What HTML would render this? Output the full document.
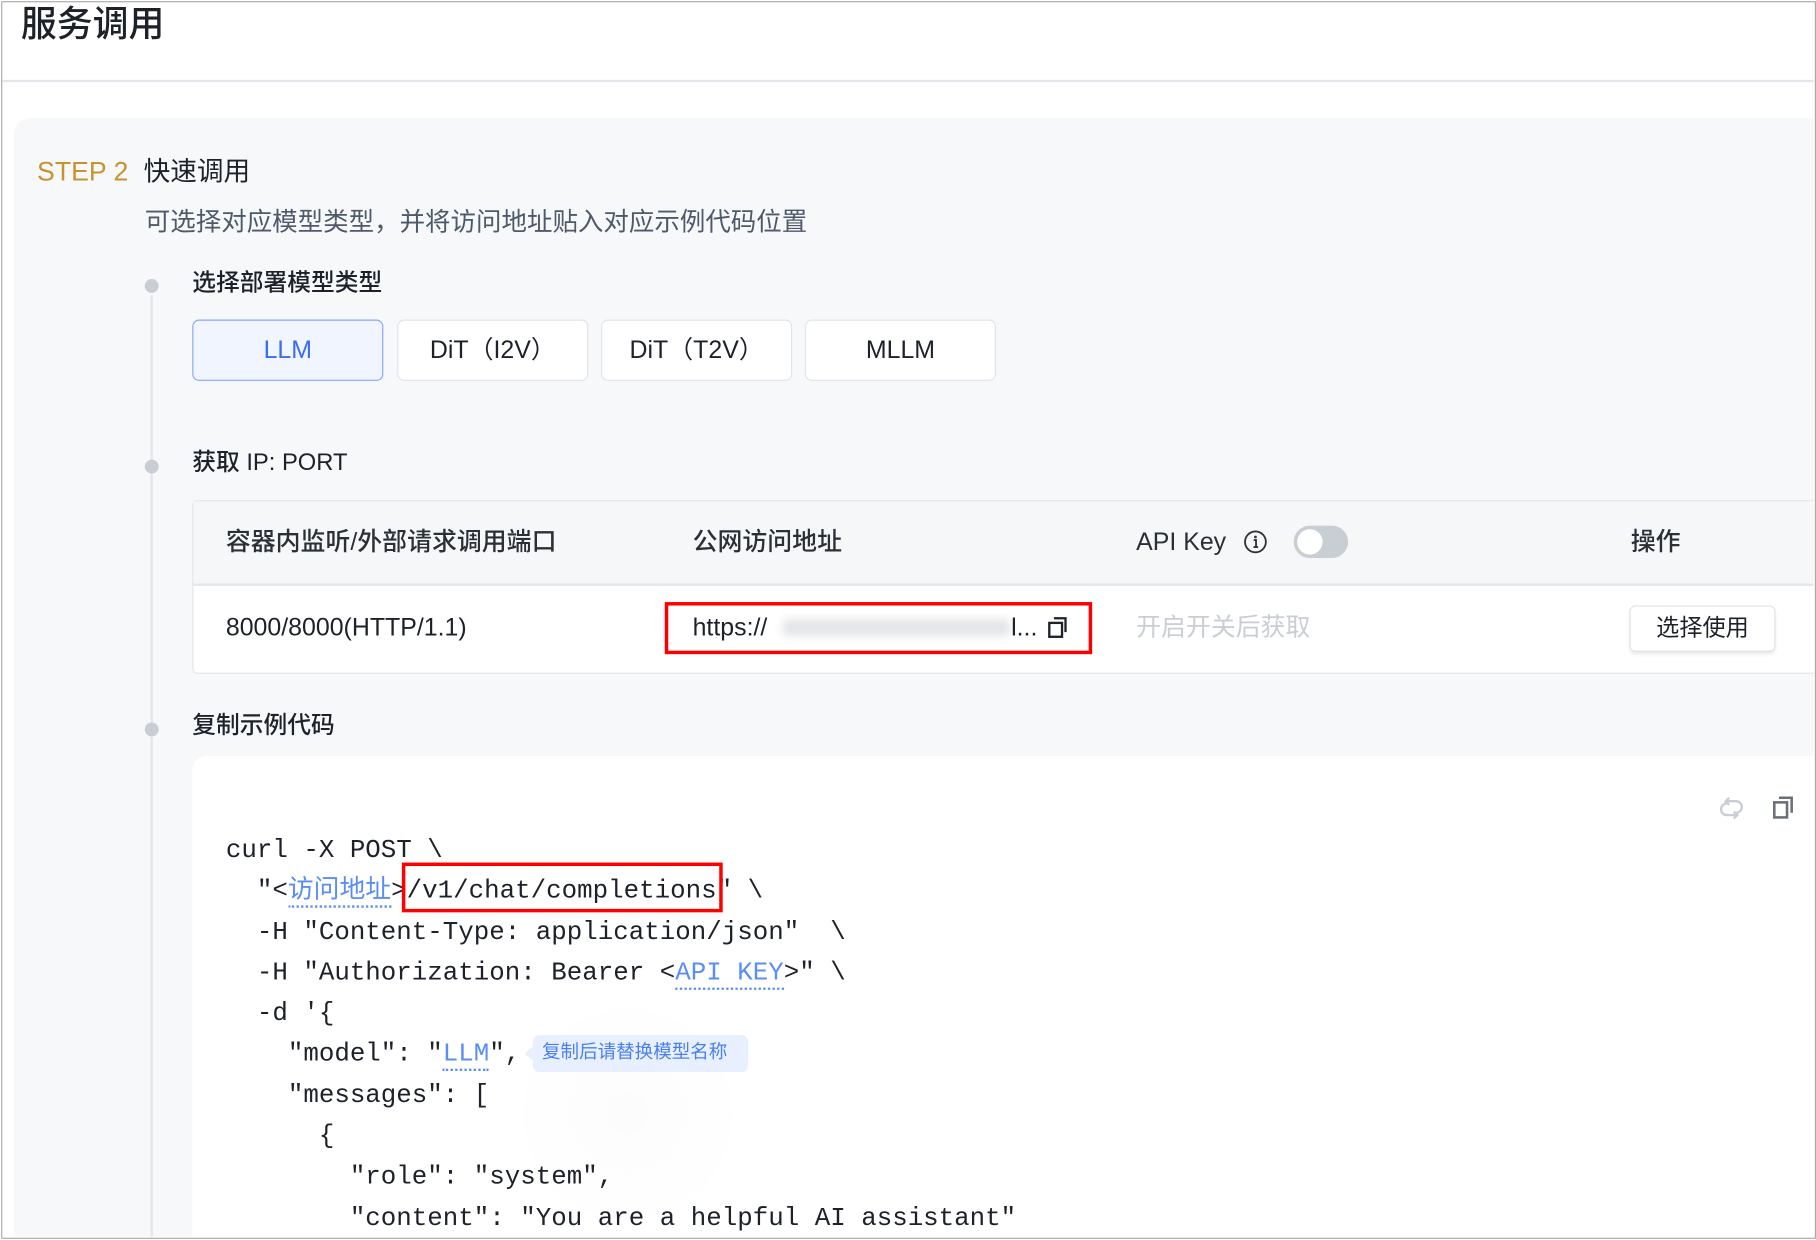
<!DOCTYPE html>
<html><head><meta charset="utf-8">
<style>
html,body{margin:0;padding:0;background:#fff;overflow:hidden;}
body{width:1816px;height:1240px;}
#w{position:absolute;left:0;top:0;width:1568px;height:1071px;transform:scale(1.15816,1.1578);transform-origin:0 0;font-family:"Liberation Sans","Noto Sans CJK SC",sans-serif;color:#1d2129;overflow:hidden;}
#in{position:absolute;left:2px;top:2px;width:1564px;height:1066px;overflow:hidden;}
.a{position:absolute;white-space:nowrap;}
.frame{position:absolute;left:1px;top:1px;width:1565px;height:1067px;border:1px solid #a9a9a9;z-index:5;pointer-events:none;}
.btn{position:absolute;top:274px;width:163px;height:51px;border:1px solid #e0e3e8;border-radius:6px;background:#fff;font-size:21.5px;line-height:51px;text-align:center;color:#1d2129;}
.dot{position:absolute;left:123px;width:12px;height:12px;border-radius:50%;background:#c9cdd4;}
.code{font-family:"Liberation Mono","Noto Sans CJK SC",monospace;font-size:22.3px;color:#1d2129;}
.lk{color:#5b8ef5;border-bottom:2px dotted #5b8ef5;}
.h{font-size:21.5px;line-height:26px;font-weight:500;color:#2b2f36;}
</style></head><body><div id="w">
<div class="frame"></div>
<div id="in">
<div class="a" style="left:16px;top:-2px;font-size:31px;line-height:42px;font-weight:500;">服务调用</div>
<div class="a" style="left:0;top:67px;width:1566px;height:2px;background:#e5e6eb;"></div>
<div class="a" style="left:10px;top:100px;width:1560px;height:980px;background:#f7f8fa;border-radius:14px 0 0 0;"></div>
<div class="a" style="left:30px;top:132px;font-size:23px;line-height:28px;color:#c8922f;">STEP 2</div>
<div class="a" style="left:122px;top:132px;font-size:23px;line-height:28px;">快速调用</div>
<div class="a" style="left:123px;top:176px;font-size:22px;line-height:28px;color:#4e5969;">可选择对应模型类型，并将访问地址贴入对应示例代码位置</div>
<div class="a" style="left:128px;top:253px;width:2px;height:820px;background:#e5e6eb;"></div>
<div class="dot" style="top:239px;"></div>
<div class="dot" style="top:395px;"></div>
<div class="dot" style="top:622px;"></div>
<div class="a" style="left:164px;top:230px;font-size:20.5px;line-height:26px;font-weight:500;">选择部署模型类型</div>
<div class="btn" style="left:164px;background:#f0f5ff;border-color:#86a8f7;color:#3a6cf4;">LLM</div>
<div class="btn" style="left:341px;">DiT（I2V）</div>
<div class="btn" style="left:517px;">DiT（T2V）</div>
<div class="btn" style="left:693px;">MLLM</div>
<div class="a" style="left:164px;top:385px;font-size:20.5px;line-height:26px;font-weight:500;">获取 IP: PORT</div>
<div class="a" style="left:164px;top:430px;width:1420px;height:148px;border:1px solid #e5e6eb;border-radius:4px 0 0 4px;background:#fff;"></div>
<div class="a" style="left:165px;top:431px;width:1420px;height:71px;background:#f6f7f9;border-bottom:2px solid #e5e6eb;"></div>
<div class="a h" style="left:193px;top:453px;">容器内监听/外部请求调用端口</div>
<div class="a h" style="left:596px;top:453px;">公网访问地址</div>
<div class="a h" style="left:979px;top:453px;">API Key</div>
<svg class="a" style="left:1071px;top:455px;" width="22" height="22" viewBox="0 0 22 22"><circle cx="11" cy="11" r="9" fill="none" stroke="#333" stroke-width="1.6"/><circle cx="11" cy="6.8" r="1.2" fill="#333"/><path d="M9.5 9.5h2v6M9.3 15.5h4" stroke="#333" stroke-width="1.6" fill="none"/></svg>
<div class="a" style="left:1115px;top:452px;width:47px;height:28px;border-radius:14px;background:#c9cdd4;"></div>
<div class="a" style="left:1118px;top:455px;width:22px;height:22px;border-radius:50%;background:#fff;"></div>
<div class="a h" style="left:1406px;top:453px;">操作</div>
<div class="a" style="left:193px;top:527px;font-size:21.5px;line-height:26px;">8000/8000(HTTP/1.1)</div>
<div class="a" style="left:572px;top:518px;width:363px;height:39px;border:3px solid #f00;"></div>
<div class="a" style="left:596px;top:527px;font-size:21.5px;line-height:26px;">https://</div>
<div class="a" style="left:674px;top:533px;width:196px;height:14px;background:#e2e4e7;filter:blur(4px);"></div>
<div class="a" style="left:871px;top:527px;font-size:21.5px;line-height:26px;">l...</div>
<svg class="a" style="left:902px;top:529px;" width="20" height="22" viewBox="0 0 20 22"><rect x="2" y="7" width="11" height="12" fill="none" stroke="#1d2129" stroke-width="2"/><path d="M6 3h10v12" fill="none" stroke="#1d2129" stroke-width="2"/></svg>
<div class="a" style="left:979px;top:527px;font-size:21.5px;line-height:26px;color:#c9cdd4;">开启开关后获取</div>
<div class="a" style="left:1405px;top:521px;width:124px;height:38px;border:1px solid #dfe2e6;border-radius:5px;background:#fff;box-shadow:0 2px 3px rgba(0,0,0,0.08);font-size:20px;line-height:38px;text-align:center;">选择使用</div>
<div class="a" style="left:164px;top:612px;font-size:20.5px;line-height:26px;font-weight:500;">复制示例代码</div>
<div class="a" style="left:164px;top:651px;width:1420px;height:430px;background:#fff;border-radius:12px 0 0 0;"></div>
<div class="a" style="left:430px;top:850px;width:220px;height:220px;border-radius:50%;background:radial-gradient(circle,rgba(0,0,0,0.012),rgba(0,0,0,0) 70%);"></div>
<svg class="a" style="left:1480px;top:685px;" width="26" height="22" viewBox="0 0 26 22"><path d="M8 5h9a5 5 0 0 1 0 10M18 17H9a5 5 0 0 1 0-10" fill="none" stroke="#c9cdd4" stroke-width="2"/><path d="M11 2l-3 3 3 3M15 14l3 3-3 3" fill="none" stroke="#c9cdd4" stroke-width="2"/></svg>
<svg class="a" style="left:1527px;top:684px;" width="22" height="24" viewBox="0 0 22 24"><rect x="3" y="7" width="11" height="13" fill="none" stroke="#6b7078" stroke-width="2.2"/><path d="M7 3h11v13" fill="none" stroke="#6b7078" stroke-width="2.2"/></svg>
<div class="a code" style="left:193px;top:715px;line-height:35.3px;white-space:pre;">curl -X POST \
  "&lt;<span class="lk">访问地址</span>&gt;/v1/chat/completions" \
  -H "Content-Type: application/json"  \
  -H "Authorization: Bearer &lt;<span class="lk">API KEY</span>&gt;" \
  -d '{
    "model": "<span class="lk">LLM</span>",
    "messages": [
      {
        "role": "system",
        "content": "You are a helpful AI assistant"</div>
<div class="a" style="left:345px;top:743px;width:271px;height:37px;border:3px solid #f00;"></div>
<div class="a" style="left:458px;top:892px;width:186px;height:32px;background:#e8f0ff;border-radius:6px;font-size:16px;line-height:32px;color:#4a7ff0;text-indent:8px;">复制后请替换模型名称</div>
<div class="a" style="left:451px;top:902px;width:0;height:0;border-top:6px solid transparent;border-bottom:6px solid transparent;border-right:7px solid #e8f0ff;"></div>
</div>
</div></body></html>
